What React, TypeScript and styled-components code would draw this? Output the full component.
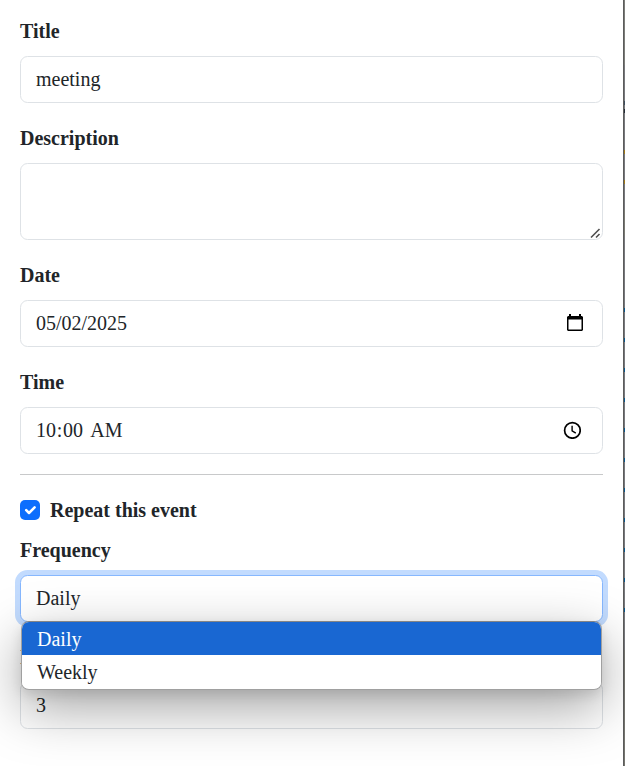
import React from "react";
import styled, { createGlobalStyle } from "styled-components";

const Global = createGlobalStyle`
  *, *::before, *::after { box-sizing: border-box; }
  html, body { margin: 0; height: 766px; overflow: hidden; background: #fff; }
  body { font: 400 20px/30px "Liberation Serif", serif; color: #212529; }
`;

const Page = styled.div`
  display: flex;
  width: 625px;
  height: 766px;
  overflow: hidden;
`;

const Form = styled.main`
  width: 623px;
  height: 766px;
  padding: 16px 20px 0;
  background: #fff;
`;

const Field = styled.div`
  display: flex;
  flex-direction: column;
  gap: 10px;
  margin-bottom: 20px;
`;

const Label = styled.label`
  display: block;
  height: 30px;
  font-weight: 700;
`;

const Control = styled.div<{ $tall?: boolean; $focused?: boolean }>`
  position: relative;
  display: flex;
  align-items: flex-start;
  justify-content: space-between;
  height: ${(p) => (p.$tall ? 77 : 47)}px;
  padding: 7px 15px;
  border: 1px solid ${(p) => (p.$focused ? "#86b7fe" : "#dee2e6")};
  border-radius: 7.5px;
  background: #fff;
  box-shadow: ${(p) => (p.$focused ? "0 0 0 5px rgba(13, 110, 253, 0.25)" : "none")};
`;

const TimeValue = styled.span`
  white-space: pre;
`;

const Colon = styled.span`
  margin: 0 0.7px;
`;

const Meridiem = styled.span`
  margin-left: 2.4px;
`;

const Resizer = styled.svg`
  position: absolute;
  right: 1px;
  bottom: 0;
`;

const CalendarIcon = styled.svg`
  margin: 5px 2px 0 0;
`;

const ClockIcon = styled.svg`
  margin: 6px 6px 0 0;
`;

const Divider = styled.hr`
  height: 1px;
  margin: 0 0 20px;
  border: 0;
  background: #c8c9ca;
`;

const CheckRow = styled.div`
  display: flex;
  align-items: center;
  gap: 10px;
  height: 30px;
  margin-bottom: 10px;
`;

const CheckBox = styled.span`
  width: 20px;
  height: 20px;
  border-radius: 5px;
  background: #0d6efd;
  svg { display: block; }
`;

const SelectWrap = styled.div`
  position: relative;
`;

const Menu = styled.ul`
  position: absolute;
  z-index: 2;
  top: 46px;
  left: 1px;
  width: 581px;
  height: 69px;
  margin: 0;
  padding: 0;
  list-style: none;
  overflow: hidden;
  border: 1px solid #a0a0a0;
  border-top-color: #858585;
  border-radius: 8px;
  background: #fff;
  box-shadow: 0 18px 54px rgba(0, 0, 0, 0.36), 0 5px 12px rgba(0, 0, 0, 0.1);
`;

const Option = styled.li<{ $active?: boolean }>`
  height: 33px;
  padding-left: 15px;
  line-height: 34px;
  color: ${(p) => (p.$active ? "#fff" : "#212529")};
  background: ${(p) => (p.$active ? "#1967d2" : "#fff")};
`;

/* Sliver of the dimmed calendar behind the dialog */
const Backdrop = styled.aside`
  display: flex;
  flex-direction: column;
  width: 2px;
  height: 766px;
  padding-top: 101px;
  border-left: 1px solid #5c5c5c;
  background: linear-gradient(#7c7d79 65px, #77787c 65px 210px, #7a7a73 210px 236px, #77787c 236px 650px, #75756f 650px);
`;

const Mark = styled.i<{ $color: string; $gap: number }>`
  flex: none;
  width: 1px;
  height: 4px;
  margin-bottom: ${(p) => p.$gap}px;
  background: ${(p) => p.$color};
`;

const marks: [string, number][] = [
  ["#3d4c5c", 4],
  ["#222b35", 37],
  ["#a07a1c", 26],
  ["#a07a1c", 124],
  ...Array.from({ length: 11 }, (): [string, number] => ["#07568a", 26]),
];

export default function App() {
  return (
    <Page>
      <Global />
      <Form>
        <Field>
          <Label>Title</Label>
          <Control>meeting</Control>
        </Field>
        <Field>
          <Label>Description</Label>
          <Control $tall>
            <Resizer width="12" height="12" viewBox="0 0 12 12" stroke="#505050" strokeWidth="1.6">
              <path d="M2 10.5 10.5 2M7 10.5l3.5-3.5" strokeDasharray="none" />
            </Resizer>
          </Control>
        </Field>
        <Field>
          <Label>Date</Label>
          <Control>
            05/02/2025
            <CalendarIcon width="20" height="20" viewBox="0 0 20 20">
              <path fillRule="evenodd" fill="#000" d="M4 1h2v2h8V1h2v2h1l1 1v13l-1 1H3l-1-1V4l1-1h1zM3.5 6.5v10h13v-10z" />
            </CalendarIcon>
          </Control>
        </Field>
        <Field>
          <Label>Time</Label>
          <Control>
            <TimeValue>10<Colon>:</Colon>00 <Meridiem>AM</Meridiem></TimeValue>
            <ClockIcon width="18" height="18" viewBox="0 0 18 18" fill="none" stroke="#000">
              <circle cx="9.4" cy="9.4" r="7.8" strokeWidth="1.7" />
              <path d="M9.1 4.8v5l3.7 2.4" strokeWidth="1.4" />
            </ClockIcon>
          </Control>
        </Field>
        <Divider />
        <CheckRow>
          <CheckBox>
            <svg width="20" height="20" viewBox="0 0 20 20" fill="none" stroke="#fff" strokeWidth="2.5" strokeLinecap="round" strokeLinejoin="round">
              <path d="m6.2 10.2 2.8 2.8 5.6-5.6" />
            </svg>
          </CheckBox>
          <Label>Repeat this event</Label>
        </CheckRow>
        <Field>
          <Label>Frequency</Label>
          <SelectWrap>
            <Control $focused>Daily</Control>
            <Menu>
              <Option $active>Daily</Option>
              <Option>Weekly</Option>
            </Menu>
          </SelectWrap>
        </Field>
        <Field>
          <Label>Interval</Label>
          <Control>3</Control>
        </Field>
      </Form>
      <Backdrop>
        {marks.map(([color, gap], i) => (
          <Mark key={i} $color={color} $gap={gap} />
        ))}
      </Backdrop>
    </Page>
  );
}
